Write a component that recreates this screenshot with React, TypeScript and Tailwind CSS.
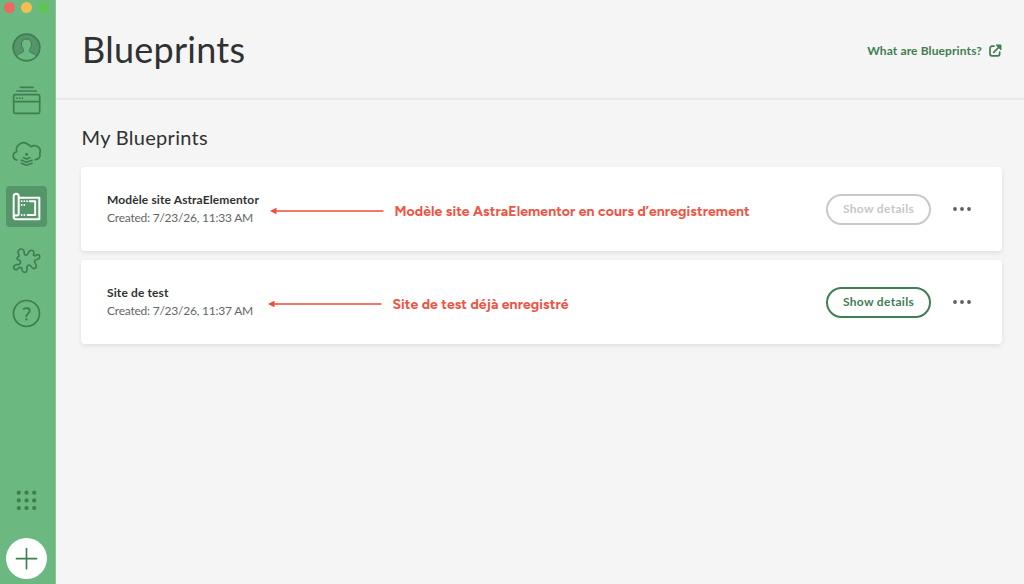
import type { ReactNode } from "react";

function Glyph({ children, light = false }: { children: ReactNode; light?: boolean }) {
  return (
    <svg
      viewBox="0 0 123 123"
      className={`block size-[41px] ${light ? "text-white" : "text-[#3f7d52]"}`}
      fill="none"
      stroke="currentColor"
      strokeWidth="5"
      strokeLinecap="round"
      strokeLinejoin="round"
    >
      {children}
    </svg>
  );
}

function NavItem({ label, active = false, children }: { label: string; active?: boolean; children: ReactNode }) {
  return (
    <button aria-label={label} className={`size-[41px] rounded-[4px] ${active ? "bg-[#55956a]" : ""}`}>
      <Glyph light={active}>{children}</Glyph>
    </button>
  );
}

function Sidebar() {
  return (
    <aside className="flex h-full w-14 shrink-0 flex-col border-r border-[#86c49a] bg-[#6bb881] pl-[6px]">
      <div className="-mt-px flex h-4 shrink-0 items-center gap-[6px]">
        <span className="-ml-[2px] size-[11px] rounded-full bg-[#ee6a5f]" />
        <span className="size-[11px] rounded-full bg-[#f5bd4f]" />
        <span className="size-[11px] rounded-full bg-[#5fc454]" />
      </div>
      <nav className="mt-[11.5px] flex flex-col gap-[12.3px]">
        <NavItem label="Account">
          <circle cx="61.5" cy="61.5" r="40" fill="#55956a" strokeWidth="5" />
          <path
            d="M61.5 36c-10 0-15 7-15 15 0 7 2 11 5 15 2 3 2 8-2 10l-9 4c-5 2-7 5-8 8 7 8 17 12 29 12s22-4 29-12c-1-3-3-6-8-8l-9-4c-4-2-4-7-2-10 3-4 5-8 5-15 0-8-5-15-15-15Z"
            fill="#6bb881"
            strokeWidth="3"
          />
        </NavItem>
        <NavItem label="Sites">
          <rect x="23" y="44" width="78" height="56" rx="4" />
          <path d="M23 65H101M33 33H91M43 22H81" />
          <path d="M33 54.5h.1M41 54.5h.1M49 54.5h.1" />
        </NavItem>
        <NavItem label="Cloud backups">
          <path d="M32 81C19 78 18 60 32 56C27 37 51 20 67 35C71 36 72 39 74 41C91 32 108 45 101 62C106 72 96 80 88 80" />
          <path d="M46 82l16 6 16-6M46 91l16 6 16-6M53 74l9 4 9-4" />
          <circle cx="62" cy="64" r="2" />
        </NavItem>
        <NavItem label="Blueprints" active>
          <path d="M39 35H100V100H32C25 100 23 97 23 92V31C23 21 38 21 38 31V84C38 88 33 89 29 88C25 88 23 91 23 95" strokeWidth="6" />
          <path d="M71 45.5H87.5V87H65" strokeWidth="6" />
          <path d="M47 45.5h.1M55 45.5h.1M63 45.5h.1M47 57h.1M55 57h.1M47 87h.1M55 87h.1" strokeWidth="5.5" />
        </NavItem>
        <NavItem label="Add-ons">
          <path d="M39 49C40 43 35 40 36 34C38 26 49 25 53 31C56 37 52 45 60 46C67 46 65 35 72 32C79 28 86 35 83 42C81 48 87 48 91 45C97 42 102 46 101 52C100 60 89 57 86 62C83 67 92 72 91 79C90 87 80 88 77 81C74 75 68 74 64 78C60 82 66 89 61 95C56 100 48 96 48 88C48 82 43 80 38 84C34 88 29 92 25 87C19 80 27 73 34 74C41 75 46 68 42 62C39 58 34 61 33 56C32 52 36 51 39 49Z" />
        </NavItem>
        <NavItem label="Help">
          <circle cx="61.5" cy="61.5" r="39" />
          <path d="M53 48C60 43 72 45 71 54C70 62 61 62 61 70" strokeWidth="5.5" />
          <path d="M61 79h.1" strokeWidth="7" />
        </NavItem>
      </nav>
      <div className="mt-auto flex flex-col gap-[17px] pb-[5.5px]">
        <button aria-label="Apps" className="size-[41px]">
          <svg viewBox="0 0 41 41" className="block size-[41px]" fill="#3f7d52">
            {[12.7, 20.4, 28.1].map((y) =>
              [12.8, 20.5, 28.2].map((x) => <circle key={`${x}-${y}`} cx={x} cy={y} r="2.1" />),
            )}
          </svg>
        </button>
        <button aria-label="Add site" className="size-[41px] rounded-full bg-white">
          <Glyph>
            <path d="M61.5 32V92M31.5 62H91.5" strokeWidth="5" />
          </Glyph>
        </button>
      </div>
    </aside>
  );
}

function Arrow() {
  return (
    <svg viewBox="0 0 114 8" className="h-2 w-[114px] shrink-0" fill="#ee4b3a">
      <path d="M0 4 6.5 .8V7.2Z" />
      <path d="M6 3.3H113.5V4.7H6Z" />
    </svg>
  );
}

type CardProps = {
  name: string;
  created: string;
  note: string;
  textClass: string;
  disabled?: boolean;
};

function BlueprintCard({ name, created, note, textClass, disabled = false }: CardProps) {
  return (
    <article className="flex h-[84px] items-center rounded-[4px] bg-white pr-[30px] pl-[26px] shadow-[0_2px_5px_rgba(0,0,0,0.09)]">
      <div className={`shrink-0 whitespace-nowrap ${textClass}`}>
        <h3 className="text-[12px] leading-[18px] font-bold tracking-[0.12px] text-[#303231]">{name}</h3>
        <p className="text-[12px] leading-[18px] tracking-[-0.23px] text-[#646665]">{created}</p>
      </div>
      <div className="flex items-center gap-[10.5px] pt-[4px] whitespace-nowrap">
        <Arrow />
        <span className="pt-[2px] font-[Figtree,Inter,sans-serif] text-[14px] leading-[18px] font-bold tracking-[0.08px] text-[#ef5344]">
          {note}
        </span>
      </div>
      <button
        disabled={disabled}
        className={`ml-auto h-[31px] w-[105px] shrink-0 rounded-full border-2 border-solid text-[12px] font-bold tracking-[0.32px] ${
          disabled ? "border-[#c9c9c9] text-[#c7c7c7]" : "border-[#3f7d52] text-[#3f7d52]"
        }`}
      >
        Show details
      </button>
      <button aria-label="More options" className="ml-[21px]">
        <svg viewBox="0 0 20 6" className="h-[6px] w-5" fill="#5d5f5e">
          <circle cx="3" cy="3" r="1.9" />
          <circle cx="10" cy="3" r="1.9" />
          <circle cx="17" cy="3" r="1.9" />
        </svg>
      </button>
    </article>
  );
}

export default function App() {
  return (
    <div className="flex h-[584px] w-[1024px] overflow-hidden bg-[#f5f5f5] font-[Lato,sans-serif]">
      <Sidebar />
      <main className="min-w-0 flex-1">
        <header className="flex h-[100px] items-center justify-between border-b-2 border-[#e8e8e8] pt-[3px] pr-[22px] pl-[26px]">
          <h1 className="pb-[3px] text-[36px] leading-[48px] tracking-[0.25px] text-[#303231]">Blueprints</h1>
          <a className="flex items-center gap-[7px] text-[12px] font-bold tracking-[0.12px] text-[#3f7d52]">
            <span className="whitespace-nowrap">What are Blueprints?</span>
            <svg viewBox="0 0 13 13" className="size-[13px]" fill="none" stroke="currentColor" strokeWidth="1.7" strokeLinecap="round">
              <path d="M5 2.2H3A2 2 0 0 0 1 4.2V9.8A2 2 0 0 0 3 11.8H8.7A2 2 0 0 0 10.7 9.8V8M4.7 8.3 10.5 2.5" />
              <path d="M7.5 1H12V5.5Z" fill="currentColor" strokeWidth="1" strokeLinejoin="round" />
            </svg>
          </a>
        </header>
        <section className="pt-[23px] pr-[22px] pl-[25px]">
          <h2 className="pl-[0.5px] text-[20px] leading-7 tracking-[0.3px] text-[#303231]">My Blueprints</h2>
          <div className="mt-[16.3px] flex flex-col gap-[9px]">
            <BlueprintCard
              name="Modèle site AstraElementor"
              created="Created: 7/23/26, 11:33 AM"
              note="Modèle site AstraElementor en cours d’enregistrement"
              textClass="w-[163px]"
              disabled
            />
            <BlueprintCard
              name="Site de test"
              created="Created: 7/23/26, 11:37 AM"
              note="Site de test déjà enregistré"
              textClass="w-[161px]"
            />
          </div>
        </section>
      </main>
    </div>
  );
}
